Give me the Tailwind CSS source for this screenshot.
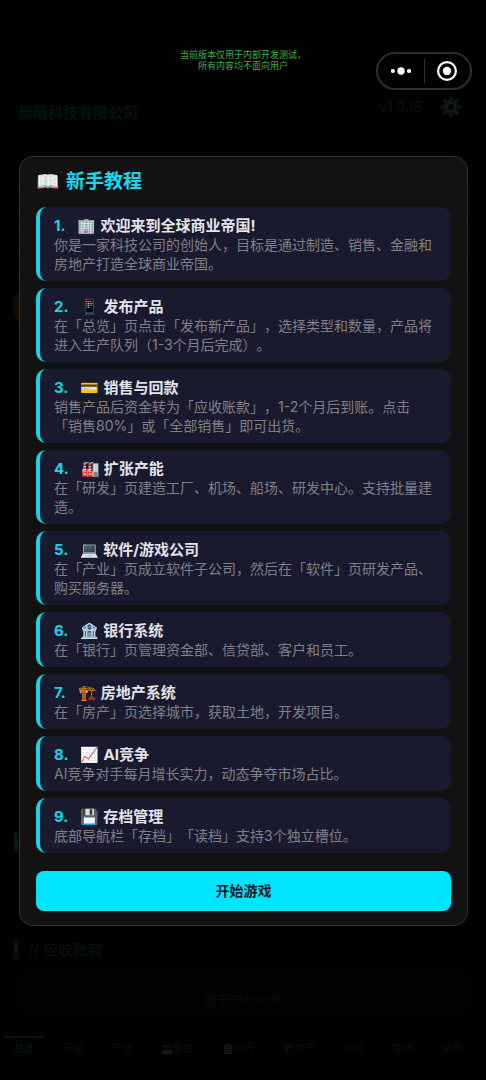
<!DOCTYPE html>
<html lang="zh-CN">
<head>
<meta charset="utf-8">
<meta name="viewport" content="width=device-width, initial-scale=1">
<title>新手教程</title>
<script src="https://cdn.jsdelivr.net/npm/@tailwindcss/browser@4"></script>
</head>
<body class="bg-black font-['Inter','Noto_Sans_CJK_SC',sans-serif] [text-spacing-trim:space-all]">
<div class="relative min-h-screen flex flex-col overflow-hidden">

  <!-- Dimmed game page behind the dialog -->
  <header class="flex items-start justify-between pt-[96px] pl-[18px] pr-6 h-[152px]">
    <h1 class="mt-[7px] text-[15px] leading-5 font-bold text-[#021416]">晨曦科技有限公司</h1>
    <div class="flex items-center gap-[18px]">
      <span class="text-[14px] leading-5 text-[#0f0f0f]">v1.0.15</span>
      <button type="button" aria-label="设置" class="text-[#0d1517]">
        <svg class="size-[22px]" viewBox="0 0 22 22" fill="none" stroke="currentColor"><circle cx="11" cy="11" r="5" stroke-width="4.500"/><path stroke-width="3.600" d="M11 .8v4M11 17.200v4M.8 11h4M17.200 11h4M3.800 3.800l2.800 2.800M15.400 15.400l2.800 2.800M18.200 3.800l-2.800 2.800M6.600 15.400l-2.800 2.800"/></svg>
      </button>
    </div>
  </header>
  <main class="flex-1 flex flex-col px-[14px]">
    <div class="flex flex-col gap-3">
      <div class="h-[42px] rounded-xl border border-[#060606]"></div>
      <div class="h-[30px] rounded-xl border border-[#060606]"></div>
      <div class="h-[32px] rounded-xl border border-[#060606]"></div>
      <div class="h-[30px] w-1/2 rounded-lg bg-[#120b00]"></div>
    </div>
    <div class="mt-auto">
      <div class="mb-[90px] h-[18px] w-1 bg-[#02181b]"></div>
      <h2 class="border-l-4 border-[#021416] pl-[10px] text-[15px] leading-[18px] text-[#0a1214]">// 应收账款</h2>
      <p class="mt-[9px] rounded-xl bg-[#020202] pt-[22px] pb-[8px] text-center text-[13px] leading-5 text-[#0b0b0b]">暂无应收账款</p>
    </div>
  </main>
  <nav class="mt-[18px] mb-[22px] flex gap-[9px] px-1 text-[10px] leading-5 text-[#0e0e0e] whitespace-nowrap">
    <a href="#" class="px-[10px] border-t-2 border-[#021416] text-[#021416] font-bold">总览</a>
    <a href="#" class="px-[10px] border-t-2 border-transparent">研发</a>
    <a href="#" class="px-[10px] border-t-2 border-transparent">产业</a>
    <a href="#" class="px-[10px] border-t-2 border-transparent"><span class="opacity-10">💻</span>软件</a>
    <a href="#" class="px-[10px] border-t-2 border-transparent"><span class="opacity-10">🏦</span>银行</a>
    <a href="#" class="px-[10px] border-t-2 border-transparent"><span class="opacity-10">🏗️</span>房产</a>
    <a href="#" class="px-[10px] border-t-2 border-transparent">排行</a>
    <a href="#" class="px-[10px] border-t-2 border-transparent">存档</a>
    <a href="#" class="px-[10px] border-t-2 border-transparent">读档</a>
  </nav>

  <!-- Tutorial dialog -->
  <div class="absolute inset-0 flex items-center justify-center pt-0.5 pl-[19px] pr-[18px]">
    <section role="dialog" aria-labelledby="dlg" class="w-full rounded-[14px] border border-[#333333] bg-[#121212] px-4 pt-[12px] pb-[14px]">
      <h2 id="dlg" class="mb-3 flex items-center gap-[6px] text-[19px] leading-[26px] font-bold text-[#1ad6ee]"><span>📖</span>新手教程</h2>
      <ol class="flex flex-col gap-[7px] text-[14px] leading-[19px] text-[#808084]">
        <li class="rounded-[10px] border-l-4 border-[#15d5ea] bg-[#1a1a2e] px-[14px] pt-[10px] pb-2">
          <h3 class="flex items-center text-[15px] leading-[18px] font-bold text-[#e4e4ea]"><span class="mr-3 text-[#15d5ea]">1.</span><span class="mr-1">🏢</span>欢迎来到全球商业帝国!</h3>
          <p>你是一家科技公司的创始人，目标是通过制造、销售、金融和房地产打造全球商业帝国。</p>
        </li>
        <li class="rounded-[10px] border-l-4 border-[#15d5ea] bg-[#1a1a2e] px-[14px] pt-[10px] pb-2">
          <h3 class="flex items-center text-[15px] leading-[18px] font-bold text-[#e4e4ea]"><span class="mr-3 text-[#15d5ea]">2.</span><span class="mr-1">📱</span>发布产品</h3>
          <p>在「总览」页点击「发布新产品」，选择类型和数量，产品将进入生产队列（1-3个月后完成）。</p>
        </li>
        <li class="rounded-[10px] border-l-4 border-[#15d5ea] bg-[#1a1a2e] px-[14px] pt-[10px] pb-2">
          <h3 class="flex items-center text-[15px] leading-[18px] font-bold text-[#e4e4ea]"><span class="mr-3 text-[#15d5ea]">3.</span><span class="mr-1">💳</span>销售与回款</h3>
          <p>销售产品后资金转为「应收账款」，1-2个月后到账。点击「销售80%」或「全部销售」即可出货。</p>
        </li>
        <li class="rounded-[10px] border-l-4 border-[#15d5ea] bg-[#1a1a2e] px-[14px] pt-[10px] pb-2">
          <h3 class="flex items-center text-[15px] leading-[18px] font-bold text-[#e4e4ea]"><span class="mr-3 text-[#15d5ea]">4.</span><span class="mr-1">🏭</span>扩张产能</h3>
          <p>在「研发」页建造工厂、机场、船场、研发中心。支持批量建造。</p>
        </li>
        <li class="rounded-[10px] border-l-4 border-[#15d5ea] bg-[#1a1a2e] px-[14px] pt-[10px] pb-2">
          <h3 class="flex items-center text-[15px] leading-[18px] font-bold text-[#e4e4ea]"><span class="mr-3 text-[#15d5ea]">5.</span><span class="mr-1">💻</span>软件/游戏公司</h3>
          <p>在「产业」页成立软件子公司，然后在「软件」页研发产品、购买服务器。</p>
        </li>
        <li class="rounded-[10px] border-l-4 border-[#15d5ea] bg-[#1a1a2e] px-[14px] pt-[10px] pb-2">
          <h3 class="flex items-center text-[15px] leading-[18px] font-bold text-[#e4e4ea]"><span class="mr-3 text-[#15d5ea]">6.</span><span class="mr-1">🏦</span>银行系统</h3>
          <p>在「银行」页管理资金部、信贷部、客户和员工。</p>
        </li>
        <li class="rounded-[10px] border-l-4 border-[#15d5ea] bg-[#1a1a2e] px-[14px] pt-[10px] pb-2">
          <h3 class="flex items-center text-[15px] leading-[18px] font-bold text-[#e4e4ea]"><span class="mr-3 text-[#15d5ea]">7.</span><span class="mr-1">🏗️</span>房地产系统</h3>
          <p>在「房产」页选择城市，获取土地，开发项目。</p>
        </li>
        <li class="rounded-[10px] border-l-4 border-[#15d5ea] bg-[#1a1a2e] px-[14px] pt-[10px] pb-2">
          <h3 class="flex items-center text-[15px] leading-[18px] font-bold text-[#e4e4ea]"><span class="mr-3 text-[#15d5ea]">8.</span><span class="mr-1">📈</span>AI竞争</h3>
          <p>AI竞争对手每月增长实力，动态争夺市场占比。</p>
        </li>
        <li class="rounded-[10px] border-l-4 border-[#15d5ea] bg-[#1a1a2e] px-[14px] pt-[10px] pb-2">
          <h3 class="flex items-center text-[15px] leading-[18px] font-bold text-[#e4e4ea]"><span class="mr-3 text-[#15d5ea]">9.</span><span class="mr-1">💾</span>存档管理</h3>
          <p>底部导航栏「存档」「读档」支持3个独立槽位。</p>
        </li>
      </ol>
      <button type="button" class="mt-[18px] block h-10 w-full rounded-lg bg-[#00e5ff] pb-0.5 text-[14px] font-bold text-[#00181c]">开始游戏</button>
    </section>
  </div>

  <!-- Host app overlay: build notice and capsule menu -->
  <p class="absolute inset-x-0 top-[49px] text-center text-[9px] leading-[11px] text-[#3fae49]">当前版本仅用于内部开发测试，<br>所有内容均不面向用户</p>
  <div class="absolute top-[52px] right-[14px] flex h-[38px] w-[96px] items-center rounded-full border-2 border-[#2e2e2e] bg-black text-white">
    <button type="button" aria-label="更多" class="flex flex-1 items-center justify-center">
      <svg class="h-2 w-5" viewBox="0 0 20 8" fill="currentColor"><circle cx="1.900" cy="4" r="2.100"/><circle cx="10" cy="4" r="3.700"/><circle cx="18" cy="4" r="2.100"/></svg>
    </button>
    <span class="h-6 w-px bg-[#333333]"></span>
    <button type="button" aria-label="关闭" class="flex flex-1 items-center justify-center">
      <svg class="size-5" viewBox="0 0 20 20"><circle cx="10" cy="10" r="8.900" fill="none" stroke="currentColor" stroke-width="2.200"/><circle cx="10" cy="10" r="4.200" fill="currentColor"/></svg>
    </button>
  </div>
</div>
</body>
</html>
